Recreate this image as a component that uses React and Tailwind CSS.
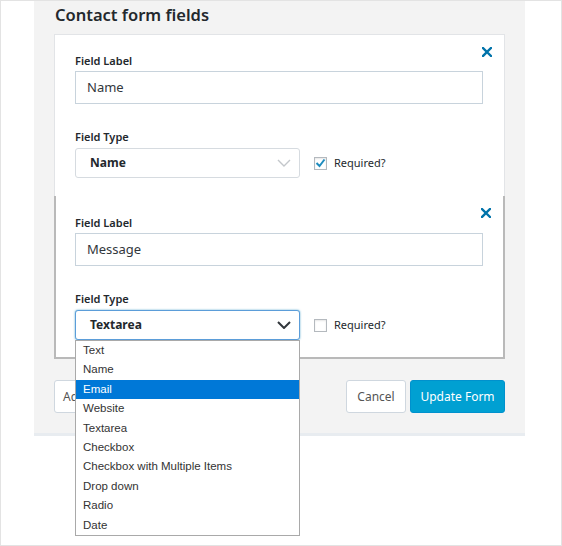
import React from 'react';

const font = { fontFamily: '"Noto Sans", "Open Sans", sans-serif' };
const listFont = { fontFamily: '"Liberation Sans", Arial, sans-serif' };

function Close() {
  return (
    <svg width="10" height="10" viewBox="0 0 10 10" className="absolute right-[12px]">
      <path d="M1 1 L9 9 M9 1 L1 9" stroke="#0073aa" strokeWidth="2.4" strokeLinecap="square" />
    </svg>
  );
}

function Chevron({ dark }) {
  return (
    <svg width="14" height="8" viewBox="0 0 14 8">
      <polyline points="1,1 7,7 13,1" fill="none" stroke={dark ? '#32373c' : '#c3c7cb'} strokeWidth={dark ? 2 : 1.4} />
    </svg>
  );
}

function Check({ checked }) {
  return (
    <div className="flex items-center gap-[7px] ml-[14px]">
      <div className="w-[13px] h-[13px] border border-[#b4b9be] bg-white flex items-center justify-center shadow-[inset_0_1px_2px_rgba(0,0,0,0.1)]">
        {checked && (
          <svg width="11" height="10" viewBox="0 0 11 10">
            <polyline points="1.5,5 4.5,8 9.5,1.5" fill="none" stroke="#1e8cbe" strokeWidth="2" />
          </svg>
        )}
      </div>
      <span className="text-[11px] text-[#23282d]">Required?</span>
    </div>
  );
}

function Field({ label, type, checked, focused }) {
  return (
    <div>
      <div className="text-[11px] font-semibold text-[#23282d] leading-[16px] mb-[2px]">Field Label</div>
      <div className="h-[33px] w-[408px] border border-[#c8d3dc] bg-white flex items-center pl-[11px] text-[13px] text-[#32373c]">
        {label}
      </div>
      <div className="text-[11px] font-semibold text-[#23282d] leading-[16px] mt-[25px] mb-[3px]">Field Type</div>
      <div className="flex items-center">
        <div
          className={
            focused
              ? 'h-[30px] w-[225px] rounded-[3px] border border-[#5b9dd9] shadow-[0_0_2px_rgba(30,140,190,0.8)] bg-white flex items-center justify-between pl-[14px] pr-[8px]'
              : 'h-[30px] w-[225px] rounded-[3px] border border-[#d6dbe0] bg-white flex items-center justify-between pl-[14px] pr-[8px]'
          }
        >
          <span className="text-[12px] font-bold text-[#23282d]">{type}</span>
          <Chevron dark={focused} />
        </div>
        <Check checked={checked} />
      </div>
    </div>
  );
}

const options = ['Text', 'Name', 'Email', 'Website', 'Textarea', 'Checkbox', 'Checkbox with Multiple Items', 'Drop down', 'Radio', 'Date'];

export default function App() {
  return (
    <div style={font} className="w-[562px] h-[546px] bg-white border border-[#e3e3e3] relative overflow-hidden">
      <div className="ml-[33px] w-[491px] bg-[#f3f3f3] border-b-[3px] border-[#e8ecf0] px-[20px] pb-[20px]">
        <h2 className="h-[33px] text-[16.5px] font-semibold text-[#23282d] leading-[28px] pl-[1px]">Contact form fields</h2>
        <div className="relative bg-white border-x border-t border-[#e2e4e7] px-[20px] pt-[18px] pb-[18px]">
          <div className="absolute top-[12px] right-0"><Close /></div>
          <Field label="Name" type="Name" checked />
        </div>
        <div className="relative bg-white border-x-2 border-b-2 border-x-[#b9b9b9] border-b-[#b9b9b9] pl-[20px] pr-[19px] pt-[19px] pb-[17px]">
          <div className="absolute top-[12px] right-0"><Close /></div>
          <div className="-ml-[1px]">
            <Field label="Message" type="Textarea" focused />
          </div>
        </div>
        <div className="flex items-center justify-between mt-[21px]">
          <button className="h-[33px] w-[70px] pl-[8px] text-left border border-[#cfd7df] rounded-[3px] bg-white text-[12px] text-[#555]">Add</button>
          <div className="flex gap-[4px]">
            <button className="h-[33px] w-[60px] border border-[#cfd7df] rounded-[3px] bg-white text-[12px] text-[#555]">Cancel</button>
            <button className="h-[33px] w-[95px] border border-[#0091cd] rounded-[3px] bg-[#00a0d2] text-[12px] text-white">Update Form</button>
          </div>
        </div>
      </div>
      <div style={listFont} className="absolute left-[74px] top-[339px] w-[225px] bg-white border border-[#a9a9a9]">
        {options.map((o) => (
          <div
            key={o}
            className={
              o === 'Email'
                ? 'h-[19.4px] leading-[19.4px] pl-[7px] text-[11.5px] bg-[#0078d7] text-white'
                : 'h-[19.4px] leading-[19.4px] pl-[7px] text-[11.5px] text-[#333]'
            }
          >
            {o}
          </div>
        ))}
      </div>
    </div>
  );
}
